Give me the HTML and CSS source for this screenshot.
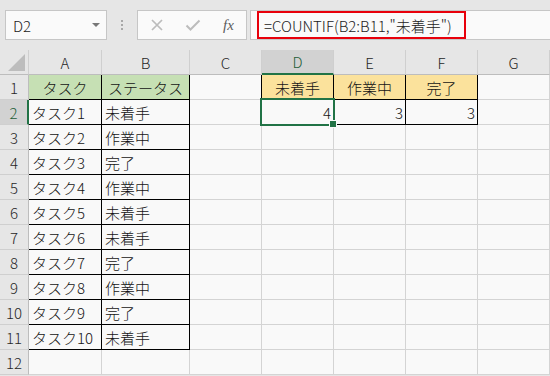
FILE: index.html
```html
<!DOCTYPE html>
<html lang="ja">
<head>
<meta charset="utf-8">
<title>COUNTIF</title>
<link rel="stylesheet" href="styles.css">
</head>
<body>
<div class="toolbar">
  <div class="namebox">
    <span class="nb-text">D2</span>
    <span class="nb-arrow"></span>
  </div>
  <div class="dots"><i></i><i></i><i></i></div>
  <div class="btns">
    <svg class="ico" width="14" height="14" viewBox="0 0 14 14"><path d="M2 2 L12 12 M12 2 L2 12" stroke="#bcbcbc" stroke-width="1.7" fill="none"/></svg>
    <svg class="ico" width="16" height="14" viewBox="0 0 16 14"><path d="M1.5 7.5 L5.5 11.5 L14.5 2.5" stroke="#bcbcbc" stroke-width="2" fill="none"/></svg>
    <span class="fx">fx</span>
  </div>
  <div class="formula">
    <div class="redbox">=COUNTIF(B2:B11,"未着手")</div>
  </div>
</div>
<div class="sheet">
  <div class="corner"><span class="tri"></span></div>
  <div class="h">A</div><div class="h">B</div><div class="h">C</div><div class="h sel">D</div><div class="h">E</div><div class="h">F</div><div class="h">G</div>

  <div class="r">1</div>
  <div class="c tb g ctr">タスク</div><div class="c tb g ctr">ステータス</div><div class="c rb"></div>
  <div class="c tb y ctr">未着手</div><div class="c tb y ctr">作業中</div><div class="c tb y ctr">完了</div><div class="c"></div>

  <div class="r sel">2</div>
  <div class="c tb">タスク1</div><div class="c tb">未着手</div><div class="c rb"></div>
  <div class="c tb num active">4</div><div class="c tb num">3</div><div class="c tb num">3</div><div class="c"></div>

  <div class="r">3</div>
  <div class="c tb">タスク2</div><div class="c tb">作業中</div><div class="c"></div><div class="c"></div><div class="c"></div><div class="c"></div><div class="c"></div>

  <div class="r">4</div>
  <div class="c tb">タスク3</div><div class="c tb">完了</div><div class="c"></div><div class="c"></div><div class="c"></div><div class="c"></div><div class="c"></div>

  <div class="r">5</div>
  <div class="c tb">タスク4</div><div class="c tb">作業中</div><div class="c"></div><div class="c"></div><div class="c"></div><div class="c"></div><div class="c"></div>

  <div class="r">6</div>
  <div class="c tb">タスク5</div><div class="c tb">未着手</div><div class="c"></div><div class="c"></div><div class="c"></div><div class="c"></div><div class="c"></div>

  <div class="r">7</div>
  <div class="c tb">タスク6</div><div class="c tb">未着手</div><div class="c"></div><div class="c"></div><div class="c"></div><div class="c"></div><div class="c"></div>

  <div class="r">8</div>
  <div class="c tb">タスク7</div><div class="c tb">完了</div><div class="c"></div><div class="c"></div><div class="c"></div><div class="c"></div><div class="c"></div>

  <div class="r">9</div>
  <div class="c tb">タスク8</div><div class="c tb">作業中</div><div class="c"></div><div class="c"></div><div class="c"></div><div class="c"></div><div class="c"></div>

  <div class="r">10</div>
  <div class="c tb">タスク9</div><div class="c tb">完了</div><div class="c"></div><div class="c"></div><div class="c"></div><div class="c"></div><div class="c"></div>

  <div class="r">11</div>
  <div class="c tb">タスク10</div><div class="c tb">未着手</div><div class="c"></div><div class="c"></div><div class="c"></div><div class="c"></div><div class="c"></div>

  <div class="r">12</div>
  <div class="c"></div><div class="c"></div><div class="c"></div><div class="c"></div><div class="c"></div><div class="c"></div><div class="c"></div>
</div>
</body>
</html>
```
FILE: styles.css
```css
* { box-sizing: border-box; }
html, body {
  margin: 0;
  padding: 0;
  width: 550px;
  height: 376px;
  overflow: hidden;
  background: #e6e6e6;
  font-family: "Noto Sans CJK JP", "Noto Sans", sans-serif;
  font-weight: 300;
  font-size: 15px;
  color: #1a1a1a;
}
.toolbar {
  height: 50px;
  padding-top: 10px;
  display: flex;
  align-items: flex-start;
}
.namebox {
  margin-left: 5px;
  width: 102px;
  height: 30px;
  background: #fafafa;
  border: 1px solid #c6c6c6;
  display: flex;
  align-items: center;
  justify-content: space-between;
  padding: 0 6px 0 7px;
}
.nb-text { line-height: 1; color: #222; }
.nb-arrow {
  width: 0; height: 0;
  border-left: 4px solid transparent;
  border-right: 4px solid transparent;
  border-top: 4px solid #777;
}
.dots {
  width: 30px;
  height: 30px;
  display: flex;
  flex-direction: column;
  align-items: center;
  justify-content: center;
  gap: 2px;
}
.dots i {
  width: 2px; height: 2px;
  background: #a8a8a8;
  display: block;
}
.btns {
  width: 110px;
  height: 30px;
  background: #fafafa;
  border: 1px solid #c6c6c6;
  display: flex;
  align-items: center;
  padding-left: 12px;
  gap: 21px;
}
.ico { display: block; }
.fx {
  font-family: "Liberation Serif", serif;
  font-style: italic;
  font-size: 15px;
  color: #5c5c5c;
  line-height: 1;
  margin-left: 1px;
}
.formula {
  margin-left: 3px;
  flex: 1;
  height: 30px;
  background: #fafafa;
  border: 1px solid #c6c6c6;
  border-right: none;
  padding-left: 6px;
}
.redbox {
  width: 209px;
  height: 28px;
  border: 2px solid #e8000b;
  display: flex;
  align-items: center;
  padding-left: 5px;
  line-height: 1;
  color: #222;
  white-space: nowrap;
  font-size: 15px;
}
.sheet {
  display: grid;
  grid-template-columns: 29px 73px 88px 72px 72px 72px 72px 72px;
  grid-template-rows: repeat(13, 25px);
}
.corner {
  background: #e6e6e6;
  border-right: 1px solid #cfcfcf;
  border-bottom: 1px solid #bdbdbd;
  position: relative;
}
.tri {
  position: absolute;
  right: 3px;
  bottom: 3px;
  width: 0; height: 0;
  border-left: 17px solid transparent;
  border-bottom: 17px solid #bdbdbd;
}
.h {
  background: #e6e6e6;
  border-right: 1px solid #cfcfcf;
  border-bottom: 1px solid #bdbdbd;
  display: flex;
  align-items: center;
  justify-content: center;
  line-height: 1;
  color: #262626;
}
.h.sel {
  background: #d2d2d2;
  border-bottom: 2px solid #217346;
  color: #1e5e38;
}
.r {
  background: #e6e6e6;
  border-right: 1px solid #bdbdbd;
  border-bottom: 1px solid #cfcfcf;
  display: flex;
  align-items: center;
  justify-content: center;
  line-height: 1;
  color: #262626;
}
.r.sel {
  background: #d2d2d2;
  border-right: 2px solid #217346;
  color: #1e5e38;
}
.c {
  background: #f9f9f9;
  border-right: 1px solid #d4d4d4;
  border-bottom: 1px solid #d4d4d4;
  display: flex;
  align-items: center;
  padding: 1px 3px 0 3px;
  line-height: 1;
  white-space: nowrap;
  color: #141414;
}
.c.tb { border-right-color: #000; border-bottom-color: #000; }
.c.rb { border-right-color: #000; }
.c.g { background: #c6e0b4; }
.c.y { background: #fbe29c; }
.ctr { justify-content: center; }
.num { justify-content: flex-end; padding-right: 2px; }
.active { position: relative; }
.active::after {
  content: "";
  position: absolute;
  left: -2px;
  top: -2px;
  right: -2px;
  bottom: -2px;
  border: 2px solid #217346;
}
.active::before {
  content: "";
  position: absolute;
  right: -4px;
  bottom: -4px;
  width: 6px;
  height: 6px;
  background: #217346;
  border: 1px solid #fafafa;
  z-index: 2;
}
```
